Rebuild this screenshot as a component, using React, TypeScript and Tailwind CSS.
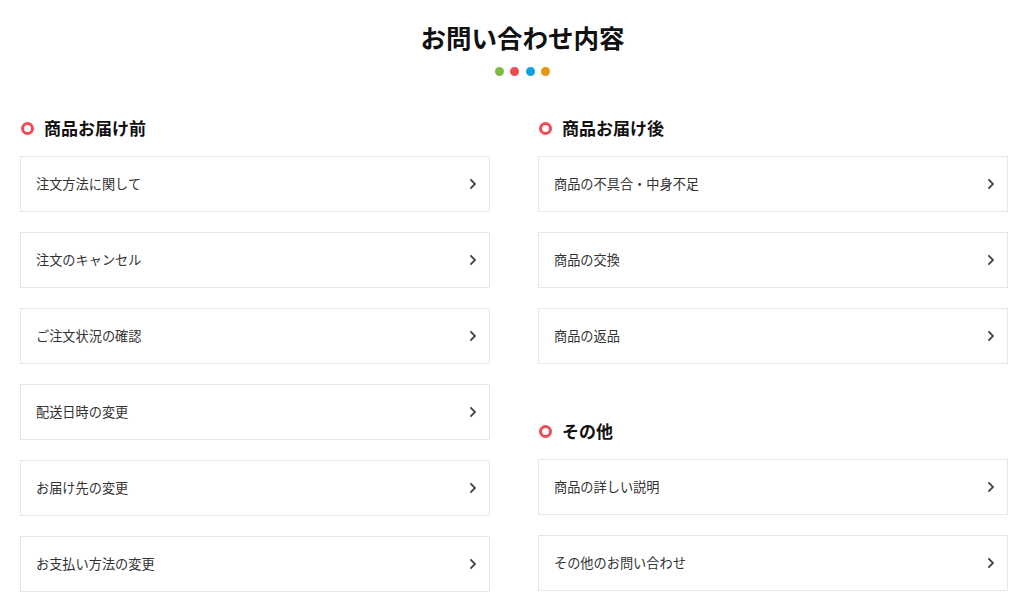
import React from "react";

const left = [
  "注文方法に関して",
  "注文のキャンセル",
  "ご注文状況の確認",
  "配送日時の変更",
  "お届け先の変更",
  "お支払い方法の変更",
];
const right1 = ["商品の不具合・中身不足", "商品の交換", "商品の返品"];
const right2 = ["商品の詳しい説明", "その他のお問い合わせ"];

function Heading({ text }: { text: string }) {
  return (
    <div className="flex h-[24px] items-center">
      <span className="ml-[1px] box-border block h-[13px] w-[13px] rounded-full border-[3.5px] border-[#ef4b56]" />
      <span className="ml-[10px] text-[17px] font-bold leading-[24px] text-[#111]">{text}</span>
    </div>
  );
}

function Card({ text }: { text: string }) {
  return (
    <div className="box-border flex h-[56px] items-center justify-between border border-[#e6e6e6] bg-white pl-[15px] pr-[13px]">
      <span className="text-[13.2px] leading-[20px] text-[#333]">{text}</span>
      <svg width="6" height="10" viewBox="0 0 6 10" fill="none">
        <path d="M1 1 L5 5 L1 9" stroke="#444" strokeWidth="1.8" strokeLinecap="square" strokeLinejoin="miter" />
      </svg>
    </div>
  );
}

export default function App() {
  return (
    <div
      className="min-h-[609px] w-[1024px] bg-white"
      style={{ fontFamily: '"Noto Sans CJK JP", "Noto Sans", sans-serif' }}
    >
      <div className="pl-[21px] pt-[19px] text-center text-[25.5px] font-bold leading-[36px] text-[#111]">
        お問い合わせ内容
      </div>
      <div className="mt-[12px] flex justify-center gap-[6.5px] pl-[21px]">
        <span className="h-[9px] w-[9px] rounded-full bg-[#7dbb3c]" />
        <span className="h-[9px] w-[9px] rounded-full bg-[#ef4c55]" />
        <span className="h-[9px] w-[9px] rounded-full bg-[#0ea0e8]" />
        <span className="h-[9px] w-[9px] rounded-full bg-[#e8960f]" />
      </div>
      <div className="mt-[40px] grid grid-cols-[470px_470px] gap-x-[48px] pl-[20px]">
        <div>
          <Heading text="商品お届け前" />
          <div className="mt-[16px] flex flex-col gap-[20px]">
            {left.map((t) => (
              <Card key={t} text={t} />
            ))}
          </div>
        </div>
        <div>
          <Heading text="商品お届け後" />
          <div className="mt-[16px] flex flex-col gap-[20px]">
            {right1.map((t) => (
              <Card key={t} text={t} />
            ))}
          </div>
          <div className="mt-[55px]">
            <Heading text="その他" />
          </div>
          <div className="mt-[16px] flex flex-col gap-[20px]">
            {right2.map((t) => (
              <Card key={t} text={t} />
            ))}
          </div>
        </div>
      </div>
    </div>
  );
}
